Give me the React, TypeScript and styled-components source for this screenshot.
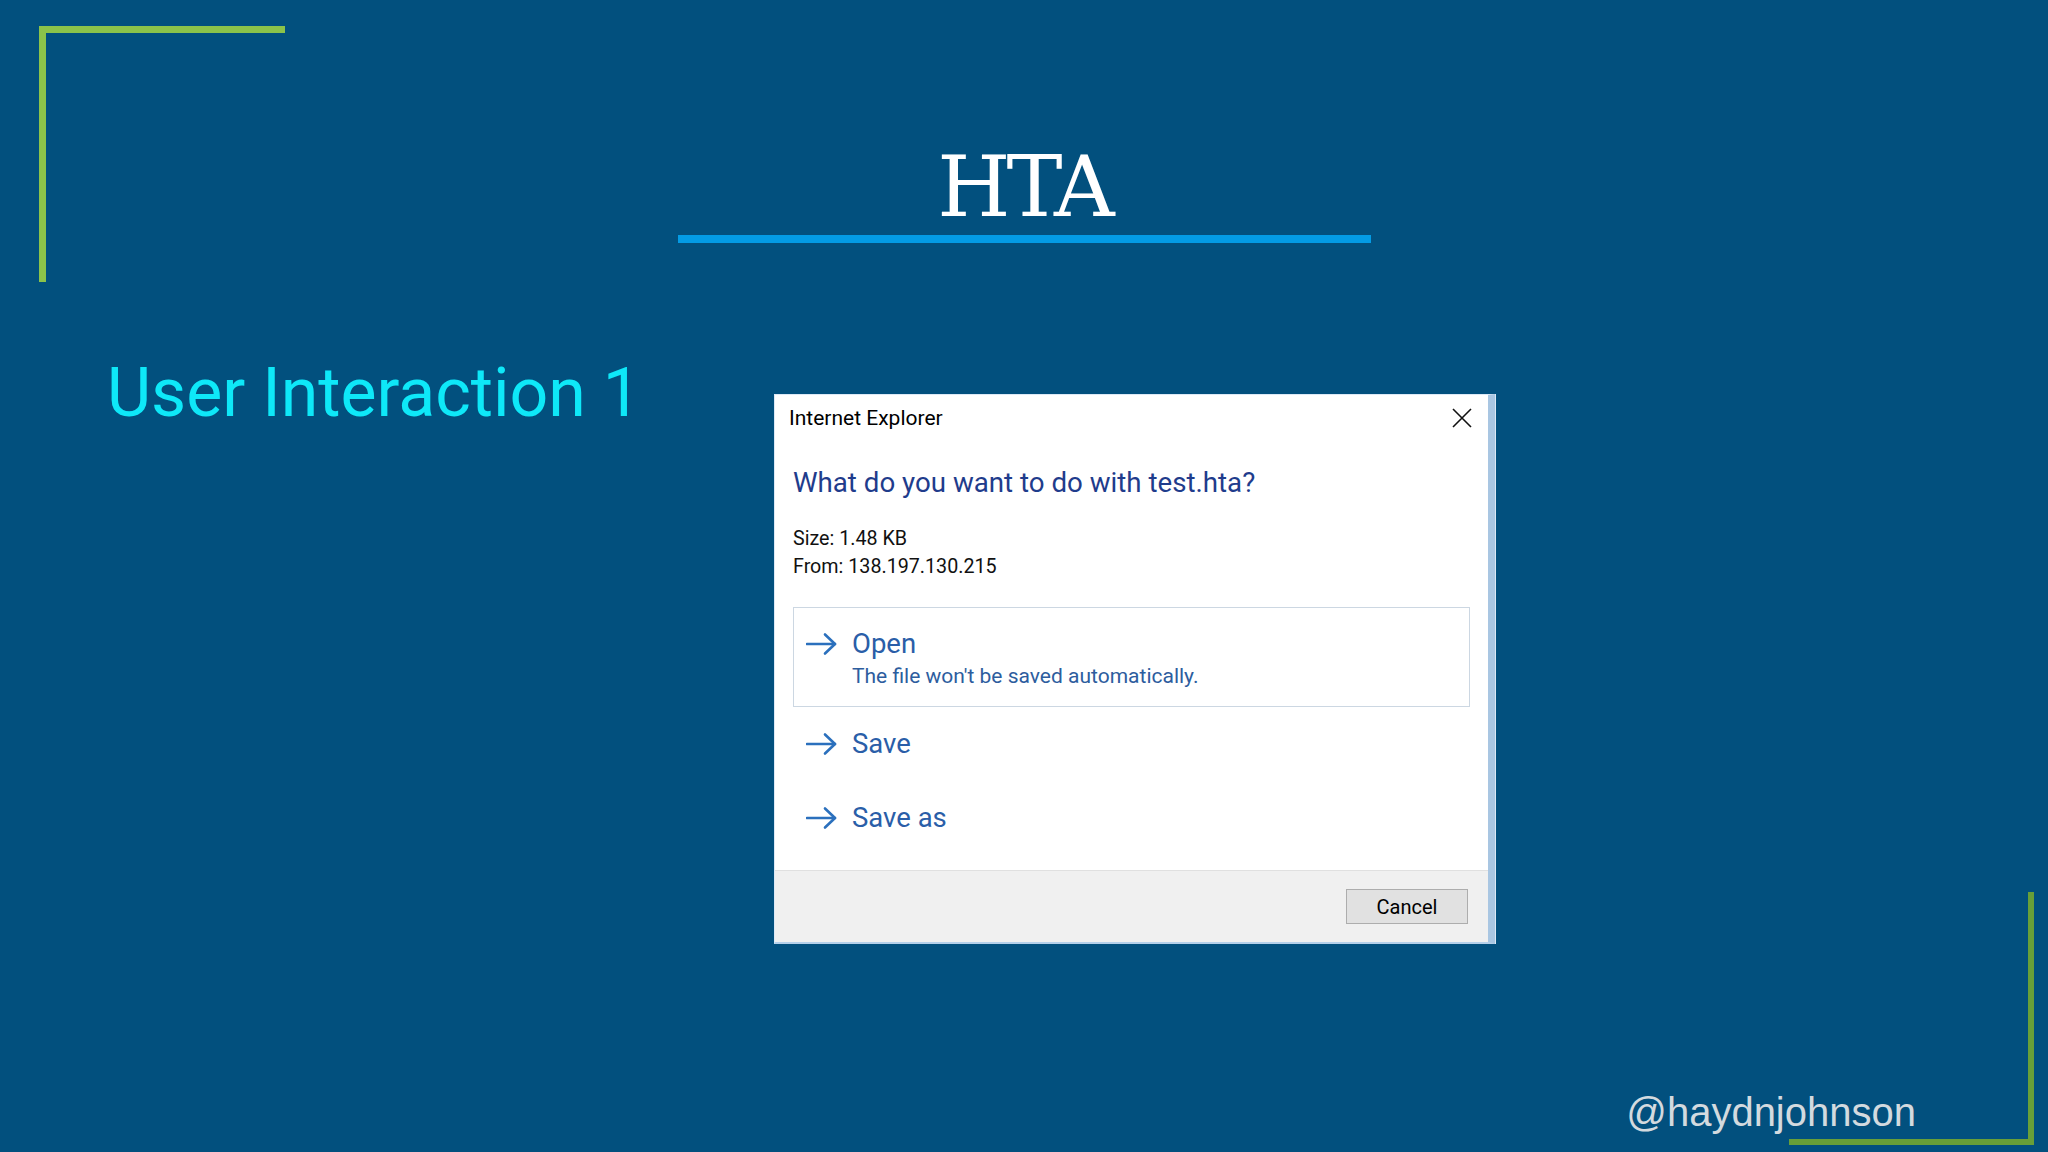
import React from "react";
import styled, { createGlobalStyle } from "styled-components";

const GlobalStyle = createGlobalStyle`
  html, body {
    margin: 0;
    padding: 0;
  }
  body {
    background: #02507e;
    font-family: "Roboto", "Liberation Sans", sans-serif;
  }
`;

const Slide = styled.div`
  position: relative;
  width: 2048px;
  height: 1152px;
  overflow: hidden;
  background: #02507e;
  display: flex;
  flex-direction: column;
  box-sizing: border-box;
  padding-bottom: 20px;
`;

const Corner = styled.div<{ $pos: "tl" | "br" }>`
  position: absolute;
  box-sizing: border-box;
  ${({ $pos }) =>
    $pos === "tl"
      ? `
    left: 39px;
    top: 26px;
    width: 246px;
    height: 256px;
    border-top: 7px solid #8bc34a;
    border-left: 7px solid #8bc34a;
  `
      : `
    right: 14px;
    bottom: 7px;
    width: 245px;
    height: 253px;
    border-right: 6px solid #689f38;
    border-bottom: 6px solid #689f38;
  `}
`;

const Header = styled.header`
  display: flex;
  flex-direction: column;
  align-items: center;
  padding-top: 145px;
`;

const Title = styled.h1`
  margin: 0;
  font-family: "DejaVu Serif", "Liberation Serif", serif;
  font-weight: 400;
  font-size: 84px;
  line-height: 84px;
  letter-spacing: -4px;
  color: #ffffff;
`;

const TitleRule = styled.div`
  width: 693px;
  height: 8px;
  margin-top: 6px;
  background: #039be5;
`;

const Body = styled.main`
  display: flex;
  align-items: flex-start;
  padding-left: 107px;
`;

const Side = styled.div`
  width: 667px;
  padding-top: 116px;
`;

const Subtitle = styled.h2`
  margin: 0;
  font-family: "Roboto", sans-serif;
  font-weight: 400;
  font-size: 68px;
  line-height: 68px;
  color: #0ee8f8;
  white-space: nowrap;
`;

const Window = styled.div`
  margin-top: 151px;
  width: 721px;
  height: 550px;
  box-sizing: border-box;
  display: flex;
  flex-direction: column;
  background: #ffffff;
  border-left: 1px solid #dce9f6;
  border-top: 1px solid #dce9f6;
  border-bottom: 2px solid #b5d0ea;
  border-right: 7px solid #a9c6e2;
  box-shadow: 1px 0 0 #dbe8f5;
  font-family: "Roboto", "Liberation Sans", sans-serif;
`;

const TitleBar = styled.div`
  height: 46px;
  display: flex;
  align-items: center;
  justify-content: space-between;
  padding: 0 15px 0 14px;
`;

const WindowTitle = styled.span`
  font-size: 21px;
  color: #000;
`;

const CloseButton = styled.div`
  width: 22px;
  height: 22px;
  display: flex;
  align-items: center;
  justify-content: center;
`;

const Content = styled.div`
  flex: 1;
  padding: 25px 18px 0 18px;
`;

const Question = styled.div`
  font-size: 27.7px;
  line-height: 34px;
  color: #1f3c8c;
`;

const Meta = styled.div`
  margin-top: 25px;
  font-size: 19.7px;
  line-height: 28px;
  color: #111;
`;

const Options = styled.div`
  margin-top: 26px;
  display: flex;
  flex-direction: column;
`;

const Option = styled.div<{ $selected?: boolean }>`
  display: flex;
  align-items: flex-start;
  gap: 15px;
  padding: 20px 12px ${({ $selected }) => ($selected ? "16px" : "20px")} 12px;
  border: 1px solid ${({ $selected }) => ($selected ? "#ccd7e2" : "transparent")};
`;

const ArrowBox = styled.div`
  width: 31px;
  height: 32px;
  display: flex;
  align-items: center;
`;

const OptionText = styled.div`
  display: flex;
  flex-direction: column;
  gap: 2px;
`;

const OptionLabel = styled.span`
  font-size: 27.5px;
  line-height: 32px;
  color: #2a5ea8;
`;

const OptionHint = styled.span`
  font-size: 21px;
  line-height: 28px;
  color: #2d5d9e;
`;

const Footer = styled.div`
  height: 72px;
  box-sizing: border-box;
  display: flex;
  align-items: center;
  justify-content: flex-end;
  padding-right: 20px;
  background: #f0f0f0;
  border-top: 1px solid #e0e0e0;
`;

const CancelButton = styled.button`
  width: 122px;
  height: 35px;
  box-sizing: border-box;
  background: #e1e1e1;
  border: 1px solid #adadad;
  font-family: "Roboto", "Liberation Sans", sans-serif;
  font-size: 20px;
  color: #000;
  padding: 0;
`;

const Bottom = styled.footer`
  margin-top: auto;
  display: flex;
  justify-content: flex-end;
  padding-right: 132px;
`;

const Handle = styled.span`
  font-family: "Liberation Sans", Arial, sans-serif;
  font-size: 40px;
  line-height: 40px;
  color: #d3dadf;
`;

const Arrow = () => (
  <svg width="31" height="24" viewBox="0 0 31 24" fill="none">
    <path d="M1 12 H29" stroke="#2b70bd" strokeWidth="2.6" strokeLinecap="round" />
    <path d="M19 2.5 L29 12 L19 21.5" stroke="#2b70bd" strokeWidth="2.6" strokeLinecap="round" strokeLinejoin="round" />
  </svg>
);

const CloseIcon = () => (
  <svg width="20" height="20" viewBox="0 0 20 20">
    <path d="M1 1 L19 19 M19 1 L1 19" stroke="#111" strokeWidth="1.6" />
  </svg>
);

const options = [
  { label: "Open", hint: "The file won't be saved automatically.", selected: true },
  { label: "Save" },
  { label: "Save as" },
];

export default function App() {
  return (
    <>
      <GlobalStyle />
      <Slide>
        <Corner $pos="tl" />
        <Corner $pos="br" />
        <Header>
          <Title>HTA</Title>
          <TitleRule />
        </Header>
        <Body>
          <Side>
            <Subtitle>User Interaction 1</Subtitle>
          </Side>
          <Window>
            <TitleBar>
              <WindowTitle>Internet Explorer</WindowTitle>
              <CloseButton>
                <CloseIcon />
              </CloseButton>
            </TitleBar>
            <Content>
              <Question>What do you want to do with test.hta?</Question>
              <Meta>
                <div>Size: 1.48 KB</div>
                <div>From: 138.197.130.215</div>
              </Meta>
              <Options>
                {options.map((o) => (
                  <Option key={o.label} $selected={o.selected}>
                    <ArrowBox>
                      <Arrow />
                    </ArrowBox>
                    <OptionText>
                      <OptionLabel>{o.label}</OptionLabel>
                      {o.hint && <OptionHint>{o.hint}</OptionHint>}
                    </OptionText>
                  </Option>
                ))}
              </Options>
            </Content>
            <Footer>
              <CancelButton>Cancel</CancelButton>
            </Footer>
          </Window>
        </Body>
        <Bottom>
          <Handle>@haydnjohnson</Handle>
        </Bottom>
      </Slide>
    </>
  );
}
